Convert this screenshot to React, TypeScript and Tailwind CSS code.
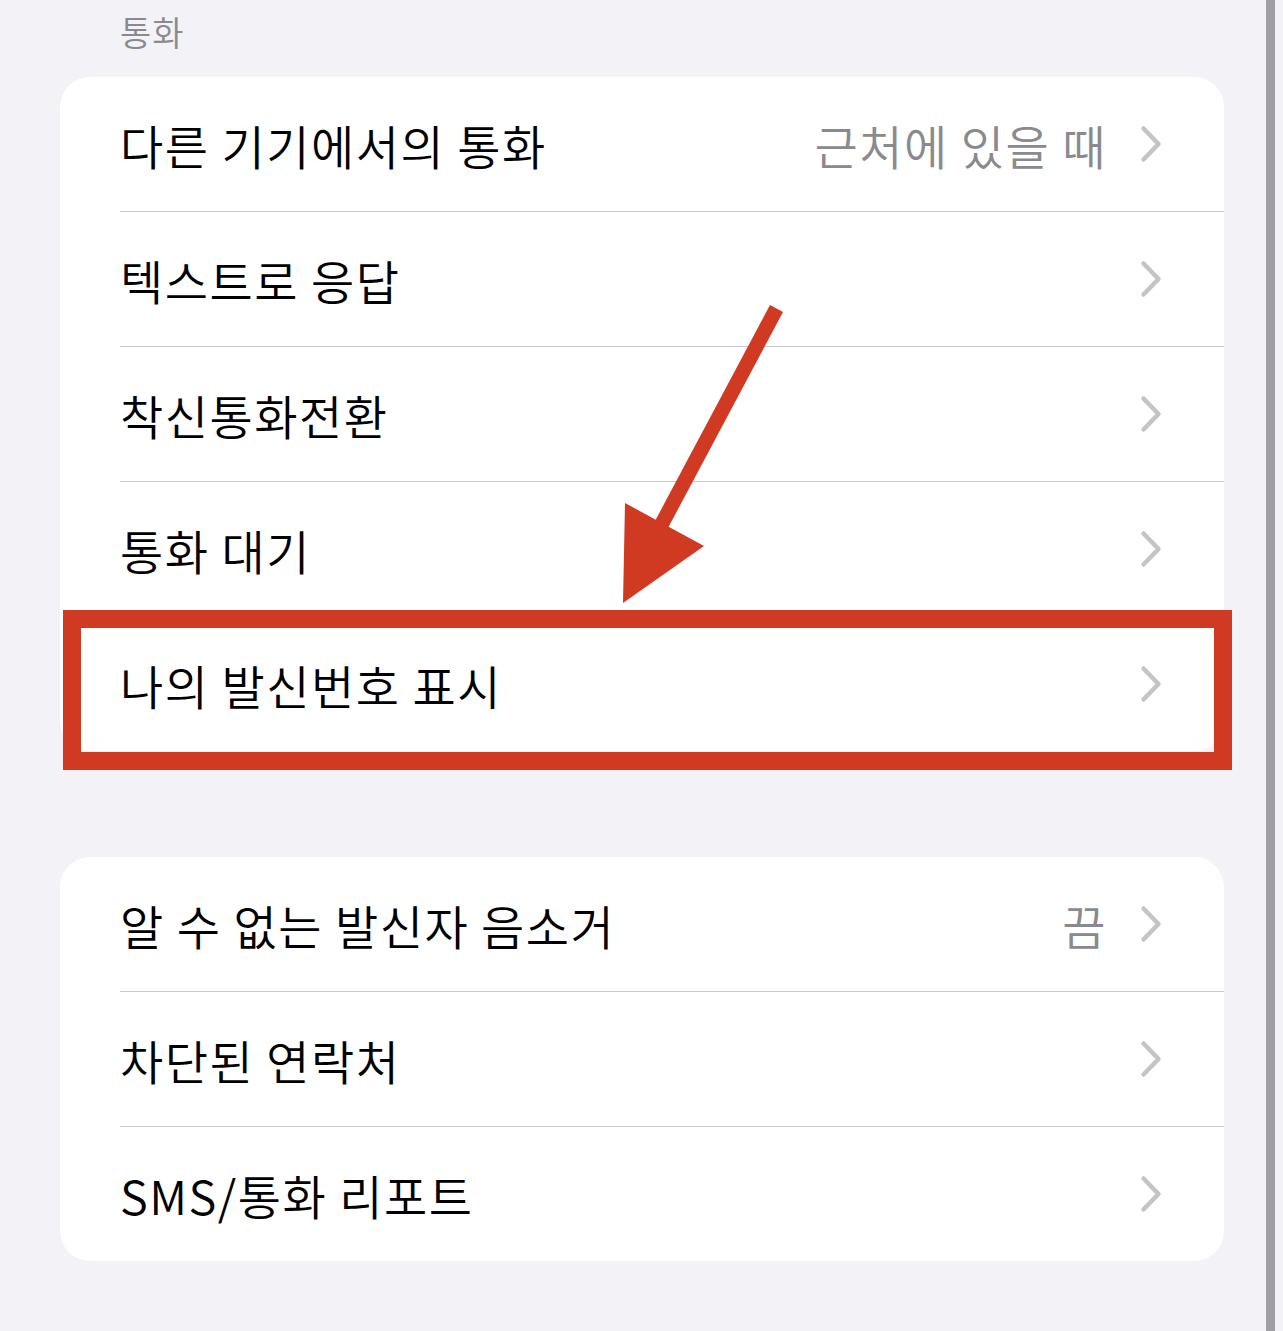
import React from 'react';

const font = { fontFamily: '"Noto Sans CJK KR", "Noto Sans", sans-serif' };

function Chevron() {
  return (
    <svg width="22" height="38" viewBox="0 0 22 38" className="shrink-0">
      <path
        d="M3.5 3.5 L18.5 19 L3.5 34.5"
        fill="none"
        stroke="#c4c4c7"
        strokeWidth="4.5"
        strokeLinecap="round"
        strokeLinejoin="round"
      />
    </svg>
  );
}

type Row = { label: string; value?: string; highlight?: boolean };

const groupOne: Row[] = [
  { label: '다른 기기에서의 통화', value: '근처에 있을 때' },
  { label: '텍스트로 응답' },
  { label: '착신통화전환' },
  { label: '통화 대기' },
  { label: '나의 발신번호 표시', highlight: true },
];

const groupTwo: Row[] = [
  { label: '알 수 없는 발신자 음소거', value: '끔' },
  { label: '차단된 연락처' },
  { label: 'SMS/통화 리포트' },
];

function SettingsRow({ row, last }: { row: Row; last: boolean }) {
  return (
    <div className="relative">
      <div className="flex h-[134px] items-center pl-[60px] pr-[62px]">
        <span className="flex-1 text-[47px] font-[350] leading-none text-black tracking-[1.5px]">{row.label}</span>
        {row.value && (
          <span className="mr-[33px] text-[47px] font-[350] leading-none text-[#8a8a8e] tracking-[1.5px]">{row.value}</span>
        )}
        <Chevron />
      </div>
      {!last && <div className="ml-[60px] h-px bg-[#c8c8cc]" />}
      {row.highlight && (
        <div className="absolute -top-[7px] left-[3px] -right-[8px] h-[160px] border-[18px] border-[#d03a22]" />
      )}
    </div>
  );
}

function Group({ rows }: { rows: Row[] }) {
  return (
    <div className="rounded-[30px] bg-white">
      {rows.map((row, i) => (
        <SettingsRow key={row.label} row={row} last={i === rows.length - 1} />
      ))}
    </div>
  );
}

export default function App() {
  return (
    <div className="relative flex h-[1331px] w-[1283px] overflow-hidden bg-[#f2f2f7]" style={font}>
      <div className="w-[1266px] pl-[60px] pr-[42px]">
        <div className="pl-[60px] pt-[15px] h-[77px] text-[34px] font-[350] leading-none text-[#8a8a8e] tracking-[1px]">통화</div>
        <Group rows={groupOne} />
        <div className="h-[106px]" />
        <Group rows={groupTwo} />
      </div>
      <div className="h-full w-[9px] bg-[#a0a0a4]" />

      <svg className="absolute left-0 top-0 pointer-events-none" width="1283" height="1331" viewBox="0 0 1283 1331">
        <polygon points="770,305 783,312 668,528 655,521" fill="#d03a22" />
        <polygon points="625,503 704,546 623,603" fill="#d03a22" />
      </svg>
    </div>
  );
}
